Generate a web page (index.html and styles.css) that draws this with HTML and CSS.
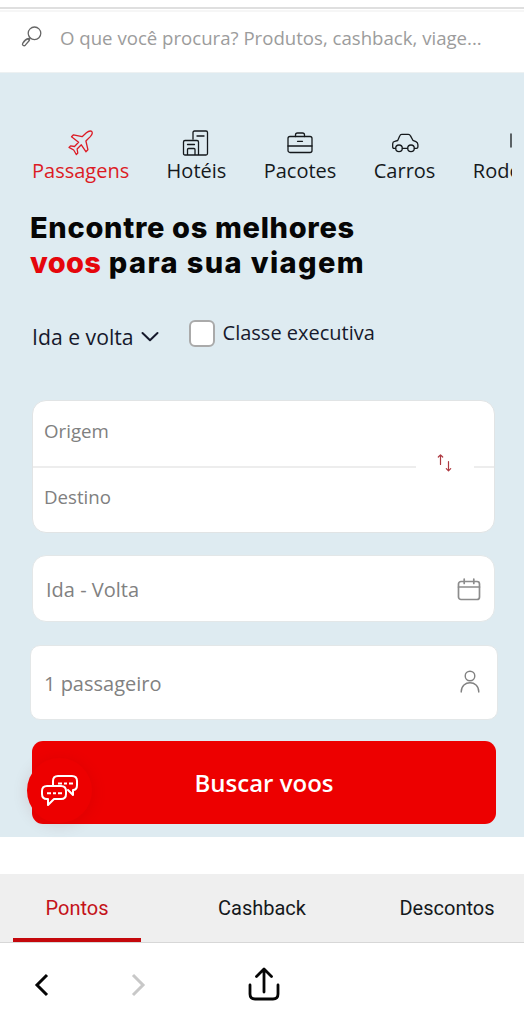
FILE: index.html
```html
<!DOCTYPE html>
<html lang="pt-BR">
<head>
<meta charset="utf-8">
<title>Passagens</title>
<link rel="stylesheet" href="styles.css">
</head>
<body>
<header class="search">
  <svg class="search-icon" width="24" height="24" viewBox="0 0 24 24"><circle cx="14.5" cy="8.3" r="6.3"/><path d="M10 13l-1.400 1.500M8.600 13.500c1 .2 1.300 1 .7 2l-4 4.700c-1.200 1.300-3.600 0-2.600-1.900 1.200-1.900 3.300-4.300 5.900-4.800z"/></svg>
  <span class="search-text">O que você procura? Produtos, cashback, viage...</span>
</header>
<main class="hero">
  <nav class="products">
    <a class="product active">
      <svg class="icon" width="28" height="28" viewBox="0 0 28 28"><path d="M3.500 7l2-2 8.600 1.900 4.300-3.900c2-1.700 4.300-2 5.300-1.400.8.9.3 3.300-1.400 5.200l-4.400 4.400 2 8.700-2 2-4.600-6.900-4.200 4.200.7 4-1.500 1.500-2.600-4.500-4.700-2.600 1.500-1.500 4 .6 4.100-4.200z" transform="translate(1 .8)"/></svg>
      <span>Passagens</span>
    </a>
    <a class="product">
      <svg class="icon" width="28" height="28" viewBox="0 0 28 28"><path d="M11 10V3.500q0-1.500 1.500-1.500H24q1.500 0 1.500 1.500v21q0 1.500-1.500 1.500H3q-1.500 0-1.500-1.500V13q0-1.500 1.500-1.500h12q1.500 0 1.500 1.500v13M5.500 26v-5.500q0-1 1-1H12q1 0 1 1V26M5.500 15.500h7M15 7h7"/></svg>
      <span>Hotéis</span>
    </a>
    <a class="product">
      <svg class="icon" width="28" height="28" viewBox="0 0 28 28"><rect x="2" y="7.500" width="24" height="16" rx="2"/><path d="M9.500 7.500V6q0-2 2-2h5q2 0 2 2v1.500M11.500 12.300h5M2 17h24"/></svg>
      <span>Pacotes</span>
    </a>
    <a class="product">
      <svg class="icon" width="28" height="28" viewBox="0 0 28 28"><path d="M4.700 19.300H3q-1.300 0-1.300-1.300v-3.300q0-2 2-2.400l3-.8 2-4.600Q9.300 5.400 10.800 5.400h6.500q1.500 0 2.200 1.500l2.400 4.400 3 1.400q2 1 2 3v2.200q0 1.400-1.500 1.400h-2.100M11.300 19.300h5.400"/><circle cx="8" cy="19.300" r="3.300"/><circle cx="20" cy="19.300" r="3.300"/></svg>
      <span>Carros</span>
    </a>
    <a class="product">
      <svg class="icon coach" width="28" height="28" viewBox="0 0 28 28"><path d="M2 5v13M8 5h14v13H8z"/></svg>
      <span>Rodov.</span>
    </a>
  </nav>
  <h1 class="title"><span class="line first">Encontre os melhores</span><span class="line second"><em>voos</em> para sua viagem</span></h1>
  <div class="options">
    <span class="trip">Ida e volta</span>
    <svg class="chevron" width="18" height="12" viewBox="0 0 18 12"><path d="M1.500 2l7.500 7.300L16.500 2"/></svg>
    <span class="checkbox"></span>
    <span class="executive">Classe executiva</span>
  </div>
  <section class="route">
    <div class="field"><span class="origin">Origem</span></div>
    <div class="divider">
      <i class="rule"></i>
      <svg class="swap" width="18" height="20" viewBox="0 0 18 20"><path d="M4.500 12.500V3M2.300 5l2.200-2.200L6.700 5M12.500 9.500V18.500M10.300 16.600l2.200 2.200 2.200-2.200"/></svg>
      <i class="rule short"></i>
    </div>
    <div class="field"><span class="destination">Destino</span></div>
  </section>
  <section class="box dates">
    <span class="date-text">Ida - Volta</span>
    <svg class="box-icon" width="26" height="26" viewBox="0 0 26 26"><rect x="2.500" y="4.500" width="21" height="18" rx="2.500"/><path d="M2.500 10h21M8.200 2v4.500M17.800 2v4.500"/></svg>
  </section>
  <section class="box people">
    <span class="people-text">1 passageiro</span>
    <svg class="box-icon thin" width="26" height="26" viewBox="0 0 26 26"><circle cx="13" cy="7" r="4.800"/><path d="M4.200 23c0-12.300 17.600-12.300 17.600 0"/></svg>
  </section>
  <div class="submit">
    <span class="submit-text">Buscar voos</span>
    <span class="chat"><svg width="40" height="36" viewBox="0 0 40 36"><path d="M13 13V8q0-5 5-5h14q5 0 5 5v4q0 5-4 5v5l-5-5"/><path d="M7 13h14q5 0 5 5v3q0 5-5 5h-7l-6 6v-6H7q-5 0-5-5v-3q0-5 5-5z"/><path class="dots" d="M18 10.500h4M24 10.500h3M29 10.500h4M7 20.200h4M13 20.200h3M18 20.200h4"/></svg></span>
  </div>
</main>
<nav class="tabs">
  <a class="tab selected"><span>Pontos</span></a>
  <a class="tab"><span>Cashback</span></a>
  <a class="tab"><span>Descontos</span></a>
</nav>
<footer class="browser">
  <svg class="back" width="20" height="28" viewBox="0 0 20 28"><path d="M16 4L6 14l10 10"/></svg>
  <svg class="forward" width="20" height="28" viewBox="0 0 20 28"><path d="M4 4l10 10L4 24"/></svg>
  <svg class="share" width="36" height="40" viewBox="0 0 36 40"><path d="M4 20v9q0 5 5 5h18q5 0 5-5V20M18 27V4.500M10.500 11.500L18 4l7.500 7.500"/></svg>
</footer>
</body>
</html>
```
FILE: styles.css
```css
* { box-sizing: border-box; }
body { margin: 0; width: 524px; height: 1024px; overflow: hidden; background: #fff; font-family: "Open Sans", sans-serif; color: #15191c; }
svg { display: block; flex: none; fill: none; stroke: currentColor; stroke-linecap: round; stroke-linejoin: round; }
span { white-space: nowrap; }
.search { height: 73px; margin: 0; padding: 7px 0 0 20px; display: flex; align-items: center; border-bottom: 1px solid #edf1f2; background: linear-gradient(#fff 7px, #dfdfdf 7px, #dfdfdf 9px, #fff 9px, #fff 10px, #f6f6f6 10px, #f6f6f6 12px, #fff 12px); }
.search-icon { color: #666; stroke-width: 1.3; margin-top: -6px; }
.search-text { margin: -4px 0 0 16px; font-size: 18.620px; color: #9c9c9c; }
.hero { height: 764px; background: #deebf1; padding: 56px 27px 0 30px; }
.products { display: flex; gap: 37.400px; width: 482px; height: 60px; padding-left: 2px; overflow: hidden; }
.product { display: flex; flex: none; flex-direction: column; align-items: center; font-size: 20px; line-height: 28px; }
.product.active { color: #dc1b25; }
.icon { stroke-width: 1.3; }
.coach { margin-left: 36px; }
.title { margin: 21px 0 0; font: 800 29px/35px Inter, sans-serif; color: #060606; }
.title em { font-style: normal; color: #e5060c; letter-spacing: .3px; }
.line { display: block; }
.first { letter-spacing: .68px; }
.second { letter-spacing: 1.400px; }
.options { display: flex; align-items: center; height: 36px; margin: 35px 0 0 2px; color: #16192c; }
.trip { font-size: 21.200px; margin-top: 7px; }
.chevron { stroke-width: 2; margin: 7px 0 0 7px; }
.checkbox { width: 26px; height: 27px; margin-left: 30px; border: 2px solid #aaa; border-radius: 6px; background: #fff; }
.executive { margin: -2px 0 0 8px; font-size: 20px; }
.route { width: 463px; height: 133px; margin: 49px 0 0 2px; border: 1px solid #e1e4e5; border-radius: 14px; background: #fff; }
.field { height: 65px; padding-left: 11px; display: flex; align-items: center; font-size: 18.700px; color: #808080; }
.field span { margin-top: -7px; }
.route .field:last-child span { margin-top: -6px; }
.divider { height: 1px; display: flex; align-items: center; }
.rule { width: 383px; height: 2px; background: #ededed; }
.rule.short { width: 20px; margin-left: auto; }
.swap { margin: -9px 0 0 20px; color: #ad3840; stroke-width: 1.2; }
.box { display: flex; align-items: center; justify-content: space-between; background: #fff; border: 1px solid #e3e7e8; color: #818181; font-size: 20px; }
.dates { width: 463px; height: 67px; margin: 22px 0 0 2px; border-radius: 14px; padding: 0 12px 0 13px; }
.date-text { margin-top: 1px; }
.people { width: 468px; height: 75px; margin-top: 23px; border-radius: 10px; padding: 0 14px 0 13px; }
.people-text { margin-top: 1px; }
.box-icon { stroke-width: 1.4; }
.dates .box-icon { margin-top: 2px; color: #8c8c8c; stroke-width: 1.7; }
.people .box-icon { margin-top: -1px; }
.submit { position: relative; width: 464px; height: 83px; margin: 21px 0 0 2px; border-radius: 11px; background: #ed0000; display: flex; align-items: center; justify-content: center; color: #fff; font-size: 24px; font-weight: 600; }
.submit-text { margin-top: 0; }
.chat { position: absolute; left: -5px; top: 17px; width: 65px; height: 65px; border-radius: 50%; background: #ed0000; box-shadow: 0 2px 16px rgba(100,0,0,.12); display: flex; align-items: center; justify-content: center; stroke-width: 2; }
.chat .dots { stroke-linecap: butt; }
.tabs { margin-top: 37px; height: 69px; border-bottom: 1px solid #d7d7d7; background: #efefef; display: flex; padding: 0 13px; justify-content: space-between; font: 20px Roboto, sans-serif; }
.tab { width: 128px; display: flex; align-items: center; justify-content: center; }
.tab.selected { color: #c41219; border-bottom: 4px solid #c4080c; padding-top: 4px; }
.browser { height: 81px; display: flex; align-items: center; color: #050505; padding: 3px 0 0 31px; }
.back, .forward { stroke-width: 3; stroke-linecap: butt; stroke-linejoin: miter; }
.forward { color: #c8c8c8; margin-left: 78px; }
.share { margin-left: 97px; stroke-width: 2.800; }
```
